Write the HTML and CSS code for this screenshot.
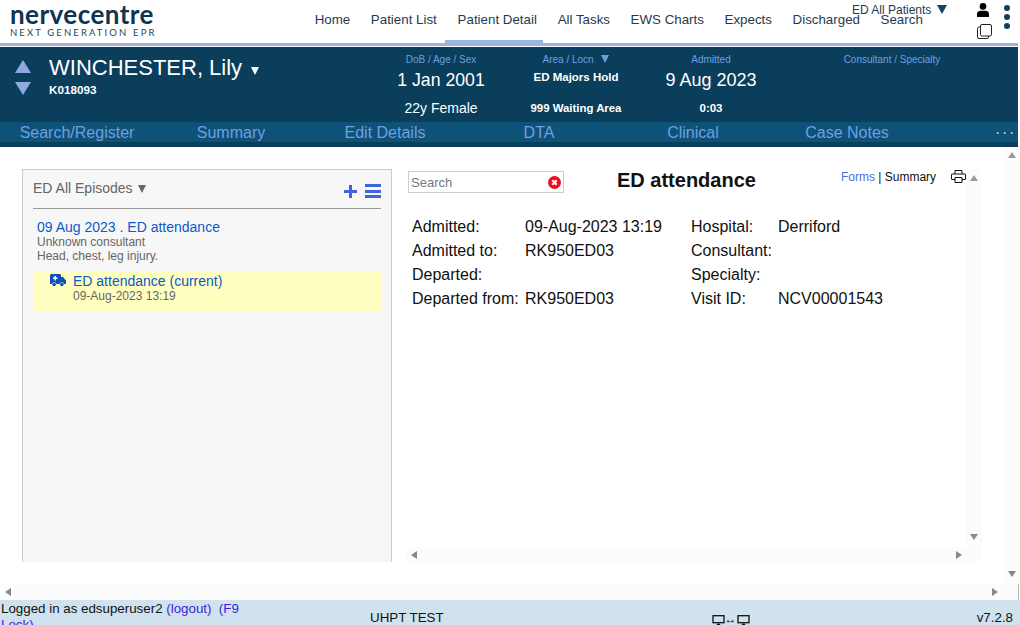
FILE: index.html
```html
<!DOCTYPE html>
<html lang="en">
<head>
  <meta charset="UTF-8">
  <title>Patient Detail</title>
  <link rel="stylesheet" href="styles.css">
</head>
<body>

<!-- Top nav -->
<header class="topbar">
  <div class="logo">
    <div class="logo-name">nervecentre</div>
    <div class="logo-sub">NEXT GENERATION EPR</div>
  </div>
  <nav class="nav">
    <a>Home</a>
    <a>Patient List</a>
    <a class="active">Patient Detail</a>
    <a>All Tasks</a>
    <a>EWS Charts</a>
    <a>Expects</a>
    <a>Discharged</a>
    <a>Search</a>
  </nav>
  <div class="list-select">ED All Patients <span class="tri-down dark"></span></div>
  <div class="top-icons">
    <div class="top-icon-col">
      <svg width="12" height="14" viewBox="0 0 12 14"><circle cx="6" cy="3.400" r="3.300" fill="#000"/><path d="M0 14V11C0 9 1.500 7.700 3.500 7.700H8.500C10.500 7.700 12 9 12 11V14Z" fill="#000"/></svg>
      <svg width="15" height="15" viewBox="0 0 15 15"><rect x="0.500" y="3" width="11" height="11.500" rx="1.500" fill="#fff" stroke="#222"/><rect x="3.500" y="0.500" width="11" height="11.500" rx="1.500" fill="#fff" stroke="#222"/></svg>
    </div>
    <div class="kebab"><i></i><i></i><i></i></div>
  </div>
</header>
<div class="topline"></div>

<!-- Patient banner -->
<section class="patient">
  <div class="patient-info">
    <div class="patient-arrows">
      <span class="arrow-up"></span>
      <span class="arrow-down"></span>
    </div>
    <div class="patient-name">
      <h1>WINCHESTER, Lily <span class="tri-down small"></span></h1>
      <div class="patient-id">K018093</div>
    </div>
  </div>
  <div class="col col-dob">
    <label>DoB / Age / Sex</label>
    <div class="big">1 Jan 2001</div>
    <div class="mid">22y Female</div>
  </div>
  <div class="col col-area">
    <label>Area / Locn <span class="tri-down label-tri"></span></label>
    <div class="bold">ED Majors Hold</div>
    <div class="bold second">999 Waiting Area</div>
  </div>
  <div class="col col-adm">
    <label>Admitted</label>
    <div class="big">9 Aug 2023</div>
    <div class="bold second">0:03</div>
  </div>
  <div class="col col-cons">
    <label>Consultant / Specialty</label>
  </div>
</section>
<div class="tabs">
  <a>Search/Register</a>
  <a>Summary</a>
  <a>Edit Details</a>
  <a>DTA</a>
  <a>Clinical</a>
  <a>Case Notes</a>
  <span class="tabs-more">···</span>
</div>
<div class="tabs-foot"></div>

<!-- Main -->
<main class="main">
  <div class="page-row">
    <div class="page-content">
      <aside class="episodes">
        <div class="episodes-head">
          <span>ED All Episodes <span class="tri-down grey"></span></span>
          <div class="episodes-tools">
            <svg width="13" height="13" viewBox="0 0 13 13"><path d="M5 0H8V5H13V8H8V13H5V8H0V5H5Z" fill="#3f66dc"/></svg>
            <div class="burger"><i></i><i></i><i></i></div>
          </div>
        </div>
        <div class="episode">
          <a>09 Aug 2023 . ED attendance</a>
          <p>Unknown consultant</p>
          <p>Head, chest, leg injury.</p>
        </div>
        <div class="episode-current">
          <svg width="16" height="13" viewBox="0 0 16 13"><path d="M1.500 0H9.500C10.300 0 11 .7 11 1.500V3H13L16 6.500V10H14.200A2.400 2.400 0 0 0 9.600 10H6.400A2.400 2.400 0 0 0 1.800 10H0V1.500C0 .7 .7 0 1.500 0Z" fill="#0b4fc0"/><path d="M4.500 2H6V3.500H7.500V5H6V6.500H4.500V5H3V3.500H4.500Z" fill="#fff"/><circle cx="4.100" cy="10.500" r="1.800" fill="#0b4fc0"/><circle cx="11.900" cy="10.500" r="1.800" fill="#0b4fc0"/></svg>
          <div>
            <a>ED attendance (current)</a>
            <p>09-Aug-2023 13:19</p>
          </div>
        </div>
      </aside>

      <section class="detail">
        <div class="detail-row">
          <div class="detail-body">
            <div class="detail-head">
              <div class="search">
                <span>Search</span>
                <svg width="13" height="13" viewBox="0 0 12 12"><circle cx="6" cy="6" r="6" fill="#e8101c"/><path d="M4 4L8 8M8 4L4 8" stroke="#fff" stroke-width="2"/></svg>
              </div>
              <h2>ED attendance</h2>
              <div class="detail-links"><a>Forms</a> | Summary</div>
              <svg class="printer" width="15" height="13" viewBox="0 0 15 13"><path d="M4 4V.5H11V4M4 9.500H1C.7 9.500 .5 9.300 .5 9V4.500C.5 4.200 .7 4 1 4H14C14.300 4 14.500 4.200 14.500 4.500V9C14.500 9.300 14.300 9.500 14 9.500H11M4 7.500H11V12.500H4Z" fill="none" stroke="#111"/></svg>
            </div>
            <div class="summary">
              <span>Admitted:</span><span>09-Aug-2023 13:19</span><span>Hospital:</span><span>Derriford</span>
              <span>Admitted to:</span><span>RK950ED03</span><span>Consultant:</span><span></span>
              <span>Departed:</span><span></span><span>Specialty:</span><span></span>
              <span>Departed from:</span><span>RK950ED03</span><span>Visit ID:</span><span>NCV00001543</span>
            </div>
          </div>
          <div class="vscroll inner">
            <span class="sb-up"></span>
            <span class="sb-down"></span>
          </div>
        </div>
        <div class="hscroll inner">
          <span class="sb-left"></span>
          <span class="sb-right"></span>
        </div>
      </section>
    </div>
    <div class="vscroll page">
      <span class="sb-up"></span>
      <span class="sb-down"></span>
    </div>
  </div>
  <div class="hscroll page">
    <span class="sb-left"></span>
    <span class="sb-right"></span>
  </div>
</main>

<!-- Status bar -->
<footer class="status">
  <div class="status-user">Logged in as edsuperuser2 <a>(logout)</a> &nbsp;<a>(F9 Lock)</a></div>
  <div class="status-env">UHPT TEST</div>
  <div class="status-screens">
    <svg width="13" height="10" viewBox="0 0 13 10"><rect x="1" y=".7" width="11" height="7" fill="none" stroke="#111" stroke-width="1.300"/><path d="M4.500 10H8.500L7.500 8.500H5.500Z" fill="#111"/></svg>
    <span>↔</span>
    <svg width="13" height="10" viewBox="0 0 13 10"><rect x="1" y=".7" width="11" height="7" fill="none" stroke="#111" stroke-width="1.300"/><path d="M4.500 10H8.500L7.500 8.500H5.500Z" fill="#111"/></svg>
  </div>
  <div class="status-version">v7.2.8</div>
</footer>

</body>
</html>
```

FILE: styles.css
```css
* { box-sizing: border-box; }

html, body {
  height: 100%;
}

body {
  margin: 0;
  height: 625px;
  overflow: hidden;
  display: flex;
  flex-direction: column;
  font-family: "Liberation Sans", Arial, sans-serif;
  background: #fff;
  color: #111;
}

/* Top nav */
.topbar {
  position: relative;
  height: 43px;
  flex: none;
  display: flex;
  padding-left: 10px;
}

.logo {
  width: 294.400px;
  flex: none;
}

.logo-name {
  font-family: Lato, sans-serif;
  font-weight: 700;
  font-size: 26px;
  line-height: 28px;
  letter-spacing: 0.450px;
  color: #0d3552;
}

.logo-sub {
  font-family: Lato, sans-serif;
  font-size: 9.500px;
  line-height: 9px;
  letter-spacing: 2.120px;
  color: #27445c;
  white-space: nowrap;
}

.nav {
  display: flex;
}

.nav a {
  padding: 12px 10.300px 0;
  height: 43px;
  font-size: 13.330px;
  line-height: 15px;
  color: #1f3a50;
  white-space: nowrap;
}

.nav a.active {
  margin: 0 4.500px 0 -2.500px;
  padding-left: 13px;
  padding-right: 6px;
  border-bottom: 3px solid #9ab5e2;
}

.list-select {
  position: absolute;
  left: 852px;
  top: 3px;
  font-size: 12px;
  line-height: 15px;
  color: #1f3a50;
}

.top-icons {
  position: absolute;
  left: 977px;
  top: 3px;
  display: flex;
  gap: 12px;
}

.top-icon-col {
  display: flex;
  flex-direction: column;
  align-items: flex-start;
  gap: 7px;
}

.kebab {
  display: flex;
  flex-direction: column;
  gap: 3px;
  padding-top: 2px;
}

.kebab i {
  display: block;
  width: 6px;
  height: 6px;
  border-radius: 50%;
  background: #0e3f5c;
}

.topline {
  flex: none;
  height: 4px;
  border-top: 3px solid #9ab5e2;
  margin-right: 2px;
}

.tri-down {
  display: inline-block;
  width: 0;
  height: 0;
  border-left: 5px solid transparent;
  border-right: 5px solid transparent;
  border-top: 9px solid #fff;
}

.tri-down.dark { border-top-color: #0f4568; margin-left: 2px; }
.tri-down.small { border-left-width: 4.500px; border-right-width: 4.500px; border-top-width: 8px; margin-left: 3px; vertical-align: 0; }
.tri-down.grey { border-left-width: 4px; border-right-width: 4px; border-top-width: 8px; border-top-color: #666; margin-left: 1px; }
.tri-down.label-tri { border-left-width: 4.500px; border-right-width: 4.500px; border-top-width: 8px; border-top-color: #6f9fe0; margin-left: 5px; vertical-align: 0; }

/* Patient banner */
.patient {
  flex: none;
  height: 75px;
  margin-right: 2px;
  background: #0a3e5b;
  color: #fff;
  display: grid;
  grid-template-columns: 371px 140px 130px 140px 222px;
}

.patient-info {
  display: flex;
  padding: 13px 0 0 15px;
  gap: 18px;
}

.patient-arrows {
  display: flex;
  flex-direction: column;
  gap: 9px;
}

.arrow-up, .arrow-down {
  width: 0;
  height: 0;
  border-left: 8px solid transparent;
  border-right: 8px solid transparent;
}

.arrow-up { border-bottom: 13px solid #8eaadc; }
.arrow-down { border-top: 13px solid #8eaadc; }

.patient-name h1 {
  margin: 0;
  font-size: 22px;
  line-height: 16px;
  font-weight: normal;
  height: 23px;
}

.patient-id {
  font-size: 11.700px;
  font-weight: bold;
  line-height: 14px;
}

.col {
  text-align: center;
  padding-top: 7px;
}

.col label {
  display: block;
  font-size: 10px;
  line-height: 12px;
  color: #6f9fe0;
}

.big {
  font-size: 17.700px;
  line-height: 22px;
  margin-top: 3px;
}

.col-adm .big { font-size: 18px; }

.mid {
  font-size: 14px;
  line-height: 17px;
  margin-top: 9px;
}

.bold {
  font-size: 11.500px;
  font-weight: bold;
  line-height: 14px;
  margin-top: 4px;
}

.bold.second { margin-top: 17px; }
.col-adm .bold.second { margin-top: 10px; }
.col-area .bold.second { font-size: 11.400px; }

/* Tabs */
.tabs {
  flex: none;
  height: 20px;
  margin-right: 2px;
  padding-top: 1px;
  background: #0f5278;
  display: flex;
  align-items: center;
}

.tabs a {
  width: 154px;
  text-align: center;
  font-size: 16px;
  color: #6f9fe0;
}

.tabs-more {
  margin-left: 71px;
  font-size: 16px;
  letter-spacing: 1.700px;
  color: #c9d8f0;
}

.tabs-foot {
  flex: none;
  height: 5px;
  margin-right: 2px;
  background: #0a3e5b;
}

/* Main area */
.main {
  flex: 1;
  min-height: 0;
  display: flex;
  flex-direction: column;
  border-right: 1px solid #bbb;
  margin-right: 1px;
}

.page-row {
  flex: 1;
  min-height: 0;
  display: flex;
}

.page-content {
  flex: 1;
  display: flex;
  padding: 22px 22px 22px 22px;
  gap: 16px;
}

.episodes {
  width: 370px;
  background: #f7f7f7;
  border: 1px solid #ccc;
  border-bottom: none;
  padding: 0 10px;
}

.episodes-head {
  display: flex;
  justify-content: space-between;
  height: 39px;
  padding-top: 10px;
  font-size: 14px;
  line-height: 16px;
  color: #666;
  border-bottom: 1px solid #999;
}

.episodes-tools {
  display: flex;
  gap: 8px;
  padding: 5px 0 0 1px;
}

.burger {
  display: flex;
  flex-direction: column;
  gap: 2.500px;
  width: 16px;
  margin-top: -1px;
}

.burger i {
  display: block;
  height: 3px;
  background: #3f66dc;
}

.episode {
  padding: 10px 0 0 4px;
}

.episode a, .episode-current a {
  display: block;
  font-size: 14px;
  line-height: 16px;
  color: #0b5ac8;
}

.episode p, .episode-current p {
  margin: 0;
  font-size: 12px;
  line-height: 14px;
  color: #666;
}

.episode-current {
  display: flex;
  gap: 7px;
  height: 40px;
  margin-top: 8px;
  padding: 2px 0 0 17px;
  background: #ffffc0;
}

.episode-current svg {
  margin-top: 1px;
}

/* Detail pane */
.detail {
  flex: 1;
  min-width: 0;
  display: flex;
  flex-direction: column;
}

.detail-row {
  flex: 1;
  min-height: 0;
  display: flex;
}

.detail-body {
  flex: 1;
  min-width: 0;
}

.detail-head {
  display: flex;
  align-items: flex-start;
  height: 46px;
  padding-top: 2px;
  white-space: nowrap;
}

.search {
  flex: none;
  width: 156px;
  height: 22px;
  border: 1px solid #ccc;
  display: flex;
  justify-content: space-between;
  align-items: center;
  padding: 0 2px 0 2px;
  font-size: 13px;
  color: #777;
}

.detail-head h2 {
  flex: none;
  margin: -2px 0 0 53px;
  font-size: 20px;
  line-height: 22px;
}

.detail-links {
  flex: none;
  margin: -1px 0 0 85px;
  font-size: 12px;
  line-height: 14px;
}

.detail-links a { color: #4a6fd8; }

.printer {
  flex: none;
  margin: -1px 0 0 15px;
}

.summary {
  display: grid;
  grid-template-columns: 113px 166px 87px 1fr;
  grid-auto-rows: 24px;
  padding-left: 4px;
  font-size: 16px;
  line-height: 24px;
}

.vscroll {
  flex: none;
  display: flex;
  flex-direction: column;
  justify-content: space-between;
  align-items: center;
  background: #fcfcfc;
}

.vscroll.inner {
  width: 16px;
  padding: 6px 0 7px;
}

.vscroll.page {
  width: 15px;
  padding: 5px 0 7px;
}

.hscroll {
  flex: none;
  display: flex;
  justify-content: space-between;
  align-items: center;
  background: #fcfcfc;
}

.hscroll.inner {
  height: 15px;
  margin-left: -2px;
  padding: 0 20px 0 5px;
}

.hscroll.page {
  height: 16px;
  padding: 0 20px 0 5px;
}

.sb-up, .sb-down, .sb-left, .sb-right {
  width: 0;
  height: 0;
  border: 4px solid transparent;
}

.sb-up { border-top: none; border-bottom: 6px solid #999; }
.sb-down { border-bottom: none; border-top: 6px solid #888; }
.sb-left { border-left: none; border-right: 6px solid #888; }
.sb-right { border-right: none; border-left: 6px solid #888; }

/* Status bar */
.status {
  flex: none;
  height: 25px;
  background: #cfe2ee;
  display: flex;
  overflow: hidden;
  font-size: 13.330px;
  color: #111;
}

.status-user {
  flex: none;
  width: 240px;
  margin-left: 1px;
  padding-top: 1px;
  line-height: 16px;
}

.status-user a { color: #3a1fe0; }

.status-env {
  margin-left: 129px;
  padding-top: 9px;
  line-height: 18px;
  white-space: nowrap;
}

.status-screens {
  margin-left: 268px;
  padding-top: 14px;
  display: flex;
  align-items: flex-start;
  font-size: 12px;
  line-height: 10px;
}

.status-screens svg {
  margin-top: 1px;
}

.status-version {
  margin-left: auto;
  padding: 9px 7px 0 0;
  line-height: 18px;
}
```
